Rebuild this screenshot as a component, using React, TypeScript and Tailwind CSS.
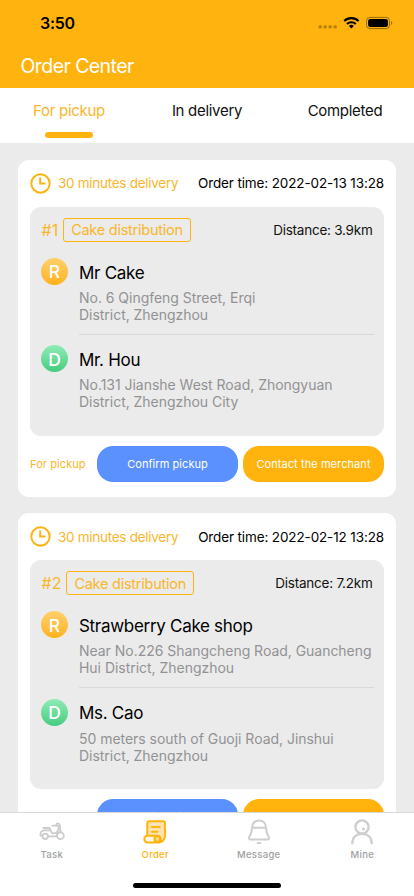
import React from "react";

type Stop = { name: string; lines: string[] };
type Order = { id: string; time: string; distance: string; from: Stop; to: Stop };

const orders: Order[] = [
  {
    id: "#1",
    time: "2022-02-13 13:28",
    distance: "3.9km",
    from: { name: "Mr Cake", lines: ["No. 6 Qingfeng Street, Erqi", "District, Zhengzhou"] },
    to: { name: "Mr. Hou", lines: ["No.131 Jianshe West Road, Zhongyuan", "District, Zhengzhou City"] },
  },
  {
    id: "#2",
    time: "2022-02-12 13:28",
    distance: "7.2km",
    from: { name: "Strawberry Cake shop", lines: ["Near No.226 Shangcheng Road, Guancheng", "Hui District, Zhengzhou"] },
    to: { name: "Ms. Cao", lines: ["50 meters south of Guoji Road, Jinshui", "District, Zhengzhou"] },
  },
];

function StatusBar() {
  return (
    <div className="flex h-[46px] items-center justify-between pl-10 pr-[21px] text-black">
      <span className="text-[16px] font-semibold leading-5 tracking-[-0.3px]">3:50</span>
      <svg width="76" height="14" viewBox="0 0 76 14" className="block">
        <g fill="#000" fillOpacity=".28">
          <rect x="1.5" y="9.2" width="3.3" height="3.3" rx="1.2" />
          <rect x="6.5" y="9.2" width="3.3" height="3.3" rx="1.2" />
          <rect x="11.5" y="9.2" width="3.3" height="3.3" rx="1.2" />
          <rect x="16.5" y="9.2" width="3.3" height="3.3" rx="1.2" />
        </g>
        <g fill="none" stroke="#000" strokeWidth="2.1">
          <path d="M27.2 5.1a10.2 10.2 0 0 1 14.4 0" />
          <path d="M30 8a6.3 6.3 0 0 1 8.8 0" />
        </g>
        <path d="M31.9 10a3.6 3.6 0 0 1 5 0L34.4 12.6Z" fill="#000" />
        <rect x="49.5" y="1.4" width="23" height="11.2" rx="3.4" fill="none" stroke="#000" strokeOpacity=".4" />
        <rect x="51.1" y="3" width="19.8" height="8" rx="2" fill="#000" />
        <path d="M74 5v4c1.7-.7 1.7-3.3 0-4Z" fill="#000" fillOpacity=".4" />
      </svg>
    </div>
  );
}

function StopRow({ stop, letter, badge }: { stop: Stop; letter: string; badge: string }) {
  return (
    <div className="flex gap-[11px]">
      <div className={`flex size-[27px] shrink-0 items-center justify-center rounded-full bg-linear-to-b pt-px text-[17.5px] font-medium leading-none text-white ${badge}`}>
        {letter}
      </div>
      <div className="min-w-0 whitespace-nowrap">
        <div className="h-[27px] pt-[1.4px] text-[17px] leading-[27px] tracking-[-0.3px] text-black">{stop.name}</div>
        <div className="mt-1 text-[14px] leading-[17px] tracking-[-0.03px] text-[#929294]">
          {stop.lines.map((l) => (
            <div key={l}>{l}</div>
          ))}
        </div>
      </div>
    </div>
  );
}

function OrderCard({ order }: { order: Order }) {
  return (
    <section className="flex h-[336.5px] shrink-0 flex-col rounded-[11px] bg-white px-3">
      <div className="flex h-[46.5px] shrink-0 items-center whitespace-nowrap text-[13.5px]">
        <svg width="21" height="21" viewBox="0 0 21 21" fill="none" stroke="#ffb30f" strokeWidth="2">
          <circle cx="10.5" cy="10.5" r="9.2" />
          <path d="M10.2 4.5v6h5.3" />
        </svg>
        <span className="ml-[7px] tracking-[-0.28px] text-[#f9b62b]">30 minutes delivery</span>
        <span className="ml-auto tracking-[-0.13px] text-black">Order time: {order.time}</span>
      </div>
      <div className="h-[229.5px] shrink-0 rounded-[11px] bg-[#ebebeb] pl-[11px] pr-[10px] pt-[11.5px]">
        <div className="flex h-6 items-center whitespace-nowrap">
          <span className="pl-[0.5px] text-[16px] text-[#f9b62b]">{order.id}</span>
          <span className="ml-[5px] flex h-6 items-center rounded-[3px] border border-[#ffb30f] pl-[7px] pr-[7px] text-[14.5px] tracking-[-0.25px] text-[#f9b62b]">
            Cake distribution
          </span>
          <span className="ml-auto mr-[1.5px] text-[13.5px] tracking-[-0.24px] text-[#111]">Distance: {order.distance}</span>
        </div>
        <div className="pt-4">
          <StopRow stop={order.from} letter="R" badge="from-[#ffd06a] to-[#ffb20f]" />
        </div>
        <div className="ml-[38px] mt-[11px] h-px bg-[#d9d9d9]" />
        <div className="pt-[10.2px]">
          <StopRow stop={order.to} letter="D" badge="from-[#8eecb6] to-[#43cc80]" />
        </div>
      </div>
      <div className="mt-[10px] flex h-[36.3px] items-center whitespace-nowrap text-[11px] leading-none">
        <span className="w-[67px] pt-px tracking-[0.08px] text-[#f9b62b]">For pickup</span>
        <button className="h-full w-[141px] rounded-[16px] bg-[#5b90ff] tracking-[0.06px] text-white">Confirm pickup</button>
        <button className="ml-[5px] h-full w-[141px] rounded-[16px] bg-[#ffb30c] tracking-[0.08px] text-white">Contact the merchant</button>
      </div>
    </section>
  );
}

function ScooterIcon() {
  return (
    <svg width="26" height="26" viewBox="0 0 26 26" fill="none" stroke="#cccccc" strokeWidth="1.8" strokeLinecap="round" strokeLinejoin="round">
      <circle cx="6.2" cy="17.3" r="2.7" />
      <circle cx="21.4" cy="16.8" r="3.4" />
      <path d="M3.3 16.6H1.5c-.5-2.9.9-4.900 3.500-5.300h6.300c.9.9.9 2.400 2 2.800 1.800.7 4-.3 5-1.600 1-1.300 1.400-2.700 1.300-4.200" />
      <path d="M9.200 17.300h8.400c.1-2.400 1.500-4.200 4-4.400l-1-6.900c-.1-1.100-.8-1.700-1.700-1.700-1.100 0-1.500.8-1.300 1.700.2.800.8 1.200 2 1.200M13.300 6.600h4.500M4.400 9h6.300l.8 2.300" />
    </svg>
  );
}

function OrderIcon() {
  return (
    <svg width="26" height="26" viewBox="0 0 26 26" fill="none" stroke="#ffb30c" strokeWidth="2" strokeLinecap="round" strokeLinejoin="round">
      <path d="M5.3 17V4.2c0-1.2.7-1.9 1.8-1.9H21.3c1.2 0 1.8.7 1.7 1.9-.8 2.8.4 7 .2 11.6-.2 5-2.4 7.6-6.7 7.6" fill="#ffe4ae" />
      <path d="M9.800 7.900h7.900M10 12.800h5.400" />
      <rect x="2.3" y="16.8" width="16.3" height="6.6" rx="3.3" fill="#fff8e8" />
      <circle cx="15.4" cy="20" r="2.9" fill="#ffd783" />
    </svg>
  );
}

function BellIcon() {
  return (
    <svg width="26" height="26" viewBox="0 0 26 26" fill="none" stroke="#cecece" strokeWidth="2" strokeLinecap="round" strokeLinejoin="round">
      <path d="M6 9C6 4.4 8.8 1.5 13 1.5S20 4.4 20 9c.1 3.4 1.2 6.3 2.6 8.8.8 1.5.2 2.8-1.2 2.8H4.600c-1.4 0-2-1.300-1.200-2.800C4.800 15.300 5.900 12.400 6 9ZM6.300 8.700h13.400" />
      <path d="M11.7 24h2.6" />
    </svg>
  );
}

function PersonIcon() {
  return (
    <svg width="26" height="26" viewBox="0 0 26 26" fill="none" stroke="#cecece" strokeWidth="2.4" strokeLinecap="round">
      <circle cx="13" cy="8" r="6.6" />
      <path d="M3.3 24.3c.2-6 4.1-9.500 9.700-9.500s9.500 3.500 9.700 9.500" />
      <circle cx="14.5" cy="10" r="1.6" fill="#cecece" stroke="none" />
    </svg>
  );
}

const tabs = [
  { label: "Task", Icon: ScooterIcon, color: "text-[#a0a0a0]" },
  { label: "Order", Icon: OrderIcon, color: "text-[#ffb30c]" },
  { label: "Message", Icon: BellIcon, color: "text-[#a0a0a0]" },
  { label: "Mine", Icon: PersonIcon, color: "text-[#a0a0a0]" },
];

export default function App() {
  return (
    <div className="flex h-[896px] w-[414px] flex-col overflow-hidden bg-[#ebebeb] font-['Inter',sans-serif]">
      <header className="h-[88.3px] shrink-0 bg-[#ffb30f]">
        <StatusBar />
        <h1 className="pl-[20.5px] pt-[6px] text-[19.5px] leading-7 tracking-[-0.57px] text-white">Order Center</h1>
      </header>
      <nav className="grid h-[55px] shrink-0 grid-cols-3 bg-white text-[15px] leading-5 tracking-[-0.3px] text-[#111]">
        <div className="flex flex-col items-center pt-[13px] text-[#f9b62b]">
          <span>For pickup</span>
          <span className="mt-[11px] h-[6px] w-[47.5px] rounded-full bg-[#ffb30f]" />
        </div>
        <div className="pt-[13px] text-center">In delivery</div>
        <div className="pt-[13px] text-center">Completed</div>
      </nav>
      <main className="flex min-h-0 flex-1 flex-col gap-[16.7px] overflow-hidden px-[18px] pt-[16.9px]">
        {orders.map((o) => (
          <OrderCard key={o.id} order={o} />
        ))}
      </main>
      <footer className="z-10 h-[84px] shrink-0 border-t border-[#d8d8d8] bg-white">
        <div className="grid h-[69.5px] grid-cols-4">
          {tabs.map(({ label, Icon, color }) => (
            <div key={label} className={`flex flex-col items-center pt-[5.5px] text-[9.5px] font-medium leading-3 tracking-[0.3px] ${color}`}>
              <Icon />
              <span className="mt-[4px]">{label}</span>
            </div>
          ))}
        </div>
        <div className="mx-auto h-[5.5px] w-[148px] rounded-full bg-black" />
      </footer>
    </div>
  );
}
